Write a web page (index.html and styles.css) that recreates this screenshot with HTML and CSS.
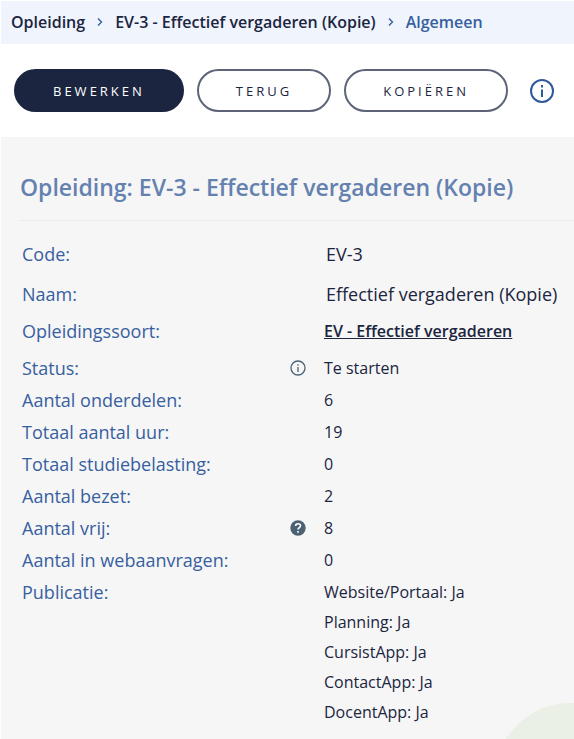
FILE: index.html
```html
<!DOCTYPE html>
<html lang="nl">
<head>
<meta charset="utf-8">
<meta name="viewport" content="width=device-width, initial-scale=1">
<title>Opleiding: EV-3 - Effectief vergaderen (Kopie)</title>
<link rel="stylesheet" href="styles.css">
</head>
<body>
<nav class="breadcrumb" aria-label="Kruimelpad">
  <a href="#">Opleiding</a>
  <svg class="chevron" viewBox="0 0 6 10" aria-hidden="true"><path d="M1 1.5 4.5 5 1 8.5"/></svg>
  <a href="#">EV-3 - Effectief vergaderen (Kopie)</a>
  <svg class="chevron" viewBox="0 0 6 10" aria-hidden="true"><path d="M1 1.5 4.5 5 1 8.5"/></svg>
  <a class="current" href="#" aria-current="page">Algemeen</a>
</nav>
<div class="toolbar">
  <button class="button primary" type="button">BEWERKEN</button>
  <button class="button" type="button">TERUG</button>
  <button class="button" type="button">KOPIËREN</button>
  <button class="info-button" type="button" aria-label="Informatie">
    <svg viewBox="0 0 24 24" aria-hidden="true"><circle cx="12" cy="12" r="11"/><path d="M12 10.5V18M12 6v2.5"/></svg>
  </button>
</div>
<main class="panel">
  <h1>Opleiding: EV-3 - Effectief vergaderen (Kopie)</h1>
  <dl class="details">
    <div class="row large"><dt>Code:</dt><dd>EV-3</dd></div>
    <div class="row large"><dt>Naam:</dt><dd>Effectief vergaderen (Kopie)</dd></div>
    <div class="row linked"><dt>Opleidingssoort:</dt><dd><a href="#">EV - Effectief vergaderen</a></dd></div>
    <div class="row">
      <dt>Status:
        <svg class="hint" viewBox="0 0 16 16" aria-hidden="true"><circle class="ring" cx="8" cy="8" r="7"/><path class="ring" d="M8 7v5M8 4.2v1.5"/></svg>
      </dt>
      <dd>Te starten</dd>
    </div>
    <div class="row"><dt>Aantal onderdelen:</dt><dd>6</dd></div>
    <div class="row"><dt>Totaal aantal uur:</dt><dd>19</dd></div>
    <div class="row"><dt>Totaal studiebelasting:</dt><dd>0</dd></div>
    <div class="row"><dt>Aantal bezet:</dt><dd>2</dd></div>
    <div class="row">
      <dt>Aantal vrij:
        <svg class="hint" viewBox="0 0 16 16" aria-hidden="true"><circle class="disc" cx="8" cy="8" r="7.7"/><path class="mark" d="M5.6 6C5.6 3 10.5 3 10.5 5.8 10.5 7.6 8 7.5 8 9.6M8 11v1.8"/></svg>
      </dt>
      <dd>8</dd>
    </div>
    <div class="row"><dt>Aantal in webaanvragen:</dt><dd>0</dd></div>
    <div class="row">
      <dt>Publicatie:</dt>
      <dd>
        <ul class="channels">
          <li>Website/Portaal: Ja</li>
          <li>Planning: Ja</li>
          <li>CursistApp: Ja</li>
          <li>ContactApp: Ja</li>
          <li>DocentApp: Ja</li>
        </ul>
      </dd>
    </div>
  </dl>
</main>
</body>
</html>
```
FILE: styles.css
```css
* {
  box-sizing: border-box;
}

body {
  margin: 0;
  padding: 1px 0 0 1px;
  min-height: 100vh;
  display: flex;
  flex-direction: column;
  background: #fff;
  color: #1b2540;
  font: 16px/32px "Open Sans", "Noto Sans", sans-serif;
}

.breadcrumb {
  display: flex;
  align-items: center;
  gap: 12px;
  padding: 5px 10px 6px;
  background: #eff4fd;
  font-weight: 600;
  white-space: nowrap;
}

.breadcrumb a {
  color: #1b2540;
  text-decoration: none;
}

.breadcrumb .current {
  color: #37609f;
}

.chevron {
  width: 6px;
  height: 10px;
  fill: none;
  stroke: #37609f;
  stroke-width: 1.4;
}

.toolbar {
  display: flex;
  align-items: center;
  gap: 13px;
  padding: 25px 13px;
}

.button {
  height: 43px;
  padding: 0 37px;
  border: 2px solid #5d6479;
  border-radius: 22px;
  background: #fff;
  color: #1b2540;
  font: 13px/20px "Open Sans", "Noto Sans", sans-serif;
  letter-spacing: 3px;
}

.button.primary {
  border-color: #1b2540;
  background: #1b2540;
  color: #fff;
  font-weight: 500;
}

.info-button {
  display: flex;
  margin-left: 9px;
  padding: 0;
  border: 0;
  background: none;
}

.info-button svg {
  width: 24px;
  height: 24px;
  fill: none;
  stroke: #30599c;
  stroke-width: 2;
}

.panel {
  position: relative;
  flex: 1;
  overflow: hidden;
  padding: 30px 0 12px 19px;
  background: #f6f6f6;
}

.panel::after {
  content: "";
  position: absolute;
  right: -71px;
  bottom: -114px;
  width: 150px;
  height: 150px;
  border-radius: 50%;
  background: #eaf0e5;
}

h1 {
  margin: 0;
  padding-bottom: 13px;
  border-bottom: 1px solid #ebebeb;
  color: #6481b0;
  font-size: 23px;
  line-height: 40px;
  font-weight: 650;
}

.details {
  margin: 14px 0 0;
  padding-left: 2px;
}

.row {
  display: grid;
  grid-template-columns: 284px 1fr;
  column-gap: 18px;
}

dt {
  display: flex;
  align-items: center;
  justify-content: space-between;
  height: 32px;
  color: #37609f;
  font-size: 18px;
}

dd {
  margin: 0;
}

.large {
  padding: 3px 0 5px;
}

.large dd {
  padding-left: 2px;
  font-size: 18px;
}

.linked {
  padding-bottom: 5px;
}

.linked a {
  color: #1b2540;
  font-weight: 600;
}

.hint {
  width: 16px;
  height: 16px;
}

.ring {
  fill: none;
  stroke: #4b6274;
  stroke-width: 1.3;
}

.disc {
  fill: #4b6274;
}

.mark {
  fill: none;
  stroke: #fff;
  stroke-width: 1.6;
}

.channels {
  margin: 0;
  padding: 1px 0 0;
  list-style: none;
  line-height: 30px;
}
```
